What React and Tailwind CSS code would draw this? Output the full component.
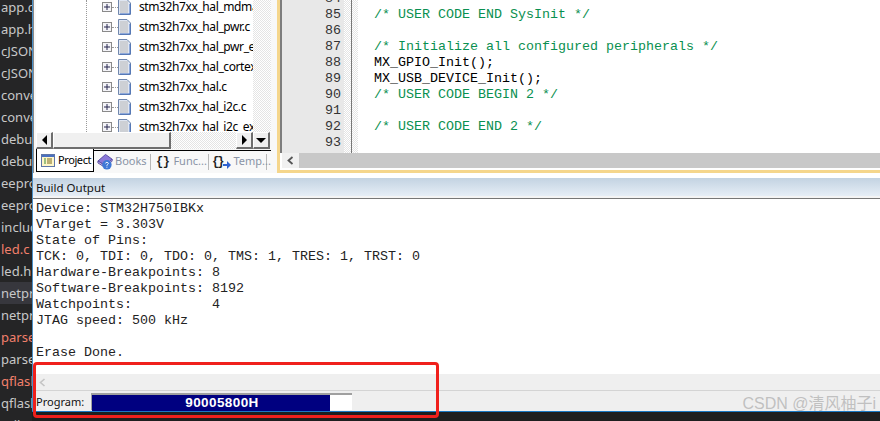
import React from "react";

const sideFiles = [
  ["app.c", "text-[#c8c8c8]"],
  ["app.h", "text-[#c8c8c8]"],
  ["cJSON.c", "text-[#c8c8c8]"],
  ["cJSON.h", "text-[#c8c8c8]"],
  ["convert.c", "text-[#c8c8c8]"],
  ["convert.h", "text-[#c8c8c8]"],
  ["debug.c", "text-[#c8c8c8]"],
  ["debug.h", "text-[#c8c8c8]"],
  ["eeprom.c", "text-[#c8c8c8]"],
  ["eeprom.h", "text-[#c8c8c8]"],
  ["include", "text-[#c8c8c8]"],
  ["led.c", "text-[#f2806c]"],
  ["led.h", "text-[#c8c8c8]"],
  ["netproc.c", "text-[#c8c8c8]", true],
  ["netproc.h", "text-[#c8c8c8]"],
  ["parser.c", "text-[#f2806c]"],
  ["parser.h", "text-[#c8c8c8]"],
  ["qflash.c", "text-[#f2806c]"],
  ["qflash.h", "text-[#c8c8c8]"],
  ["utils.c", "text-[#c8c8c8]"],
];

const treeFiles = [
  "stm32h7xx_hal_mdma.c",
  "stm32h7xx_hal_pwr.c",
  "stm32h7xx_hal_pwr_ex.c",
  "stm32h7xx_hal_cortex.c",
  "stm32h7xx_hal.c",
  "stm32h7xx_hal_i2c.c",
  "stm32h7xx_hal_i2c_ex.c",
];

const codeLines = [
  ["84", "", ""],
  ["85", "/* USER CODE END SysInit */", "c"],
  ["86", "", ""],
  ["87", "/* Initialize all configured peripherals */", "c"],
  ["88", "MX_GPIO_Init();", ""],
  ["89", "MX_USB_DEVICE_Init();", ""],
  ["90", "/* USER CODE BEGIN 2 */", "c"],
  ["91", "", ""],
  ["92", "/* USER CODE END 2 */", "c"],
  ["93", "", ""],
];

const outputLines = [
  "Device: STM32H750IBKx",
  "VTarget = 3.303V",
  "State of Pins:",
  "TCK: 0, TDI: 0, TDO: 0, TMS: 1, TRES: 1, TRST: 0",
  "Hardware-Breakpoints: 8",
  "Software-Breakpoints: 8192",
  "Watchpoints:          4",
  "JTAG speed: 500 kHz",
  "\u00a0",
  "Erase Done.",
];

const hatch = {
  backgroundImage:
    "repeating-conic-gradient(#e4e4e4 0% 25%, #ffffff 0% 50%)",
  backgroundSize: "2px 2px",
};

const PlusBox = () => (
  <svg width="10" height="10" viewBox="0 0 10 10" className="shrink-0">
    <rect x="0.5" y="0.5" width="9" height="9" fill="#f4f4f8" stroke="#8a8a8a" />
    <path d="M2 5H8M5 2V8" stroke="#27274f" />
  </svg>
);

const FileIcon = () => (
  <svg width="13" height="16" viewBox="0 0 13 16" className="shrink-0">
    <path d="M0.5 0.5H9L12.5 4V15.5H0.5Z" fill="#dfe6f2" stroke="#6f86ad" />
    <rect x="2" y="2" width="8" height="12" fill="#bdbdbd" opacity="0.55" />
    <path d="M12 5V15H2" stroke="#3f6cc0" fill="none" />
  </svg>
);

const ScrollBtn = ({ w, children }) => (
  <div
    className={`${w} h-full shrink-0 flex items-center justify-center bg-[#f0f0f0] border-r-2 border-b-2 border-[#6e6e6e] border-t border-l border-t-white border-l-white`}
  >
    {children}
  </div>
);

const ProjectIcon = () => (
  <svg width="14" height="13" viewBox="0 0 14 13" className="shrink-0">
    <rect x="0.5" y="0.5" width="13" height="12" fill="#fff6c8" stroke="#5f76a8" />
    <rect x="1" y="1" width="12" height="2" fill="#4a70c0" />
    <path d="M3 5H5M3 7H5M3 9H5" stroke="#3a8a3a" />
    <path d="M6 5H11M6 7H11M6 9H11" stroke="#7a6a20" />
  </svg>
);

const BooksIcon = () => (
  <svg width="17" height="18" viewBox="0 0 18 18" className="shrink-0">
    <path d="M1 8L9 1L16 6L9 13Z" fill="#8a78d8" stroke="#55479f" />
    <path d="M1 8V10L9 15L16 8V6L9 13Z" fill="#c9c2ee" stroke="#55479f" />
    <circle cx="10.5" cy="12" r="5" fill="#3f78d6" />
    <path d="M9 10.5C9 9 12 9 12 10.5C12 11.5 10.5 11.5 10.5 13M10.5 14V15" stroke="#fff" fill="none" />
  </svg>
);

const TempArrow = () => (
  <svg width="8" height="8" viewBox="0 0 8 8" className="shrink-0 self-end mb-[1px] -ml-[1px]">
    <path d="M0 3H4V0L8 4L4 8V5H0Z" fill="#2f62d0" />
  </svg>
);

const Sidebar = () => (
  <div className="w-[32px] shrink-0 h-full bg-[#252526] overflow-hidden font-['Noto_Sans',sans-serif] text-[13px]">
    <div className="-mt-[4px]">
      {sideFiles.map(([name, color, active]) => (
        <div
          key={name}
          className={`h-[22px] leading-[22px] pl-[1px] whitespace-nowrap overflow-hidden ${color} ${active ? "bg-[#37373d]" : ""}`}
        >
          {name}
        </div>
      ))}
    </div>
  </div>
);

const ProjectPanel = () => (
  <div className="w-[244px] shrink-0 h-full flex flex-col pl-[2px] pr-[6px] bg-[#f8f8f8] border-l border-[#8a8a8a]">
    {/* tree */}
    <div className="h-[132px] shrink-0 flex overflow-hidden bg-white">
      <div className="w-[217px] shrink-0 overflow-hidden relative">
        <div className="-mt-[3px] font-['Noto_Sans',sans-serif] text-[12px] text-black">
          {treeFiles.map((f) => (
            <div key={f} className="h-[20px] flex items-center pl-[66px] whitespace-nowrap">
              <PlusBox />
              <div className="w-[6px] shrink-0 border-t border-dotted border-[#999]" />
              <FileIcon />
              <span className="ml-[8px] tracking-[-0.4px]">{f}</span>
            </div>
          ))}
        </div>
        <div className="absolute left-[50px] top-0 bottom-0 border-l border-dotted border-[#999]" />
      </div>
      <div className="flex-1" style={hatch} />
    </div>
    {/* scrollbar */}
    <div className="h-[17px] shrink-0 flex">
      <ScrollBtn w="w-[17px]">
        <div className="w-0 h-0 border-y-[5px] border-y-transparent border-r-[5px] border-r-black" />
      </ScrollBtn>
      <div className="w-[118px] h-full shrink-0 bg-[#f0f0f0] border-r-2 border-b-2 border-[#6e6e6e] border-t border-l border-t-white border-l-white" />
      <div className="w-[65px] h-full shrink-0" style={hatch} />
      <ScrollBtn w="w-[17px]">
        <div className="w-0 h-0 border-y-[5px] border-y-transparent border-l-[5px] border-l-black" />
      </ScrollBtn>
      <ScrollBtn w="w-[17px]">
        <div className="w-0 h-0 border-x-[5px] border-x-transparent border-t-[5px] border-t-black" />
      </ScrollBtn>
    </div>
    {/* tabs */}
    <div className="h-[23px] mt-[1px] shrink-0 flex font-['Noto_Sans',sans-serif] text-[11px] text-[#8a94a6] whitespace-nowrap">
      <div className="w-[58px] h-full shrink-0 -mt-[1px] pt-[1px] flex items-center gap-[3px] pl-[4px] bg-white border-b border-x border-black text-black tracking-[-0.4px] overflow-hidden">
        <ProjectIcon />
        <span>Project</span>
      </div>
      <div className="flex-1 flex items-center border-t border-black h-[22px]">
        <div className="w-[57px] h-[16px] flex items-center gap-[1px] border-r border-[#b8b8b8] pl-[3px]">
          <BooksIcon />
          <span>Books</span>
        </div>
        <div className="w-[58px] h-[16px] flex items-center gap-[4px] border-r border-[#b8b8b8] pl-[5px]">
          <span className="font-['Liberation_Mono',monospace] font-bold text-[#222] text-[12px] tracking-[-0.5px]">{"{}"}</span>
          <span>Func...</span>
        </div>
        <div className="w-[58px] h-[16px] flex items-center gap-[2px] border-r border-[#b8b8b8] pl-[3px]">
          <span className="font-['Liberation_Mono',monospace] font-bold text-[#222] text-[12px] tracking-[-2px]">{"{}"}</span>
          <TempArrow />
          <span>Temp...</span>
        </div>
      </div>
    </div>
  </div>
);

const EditorPanel = () => (
  <div className="flex-1 min-w-0 h-[173px] flex flex-col bg-white border-l-[3px] border-b-[3px] border-[#f5d68c]">
    <div className="flex-1 min-h-0 flex overflow-hidden border-l-2 border-[#7d7d7d]">
      <div className="w-[62px] shrink-0 bg-[#e8e8e8]">
        <div className="-mt-[9px] font-['Liberation_Mono',monospace] text-[13.33px] leading-[16px] text-[#333] text-right pr-[3px]">
          {codeLines.map(([n]) => (
            <div key={n} className="h-[16px]">{n}</div>
          ))}
        </div>
      </div>
      <div className="w-[7px] shrink-0" style={hatch} />
      <div className="w-px shrink-0 bg-[#777]" />
      <div className="w-[6px] shrink-0" style={hatch} />
      <div className="flex-1 min-w-0 pl-[16px]">
        <div className="-mt-[9px] font-['Liberation_Mono',monospace] text-[13.33px] leading-[16px] whitespace-pre">
          {codeLines.map(([n, text, kind]) => (
            <div key={n} className={`h-[16px] ${kind === "c" ? "text-[#0a9050]" : "text-black"}`}>
              {text}
            </div>
          ))}
        </div>
      </div>
    </div>
    <div className="h-[15px] shrink-0 flex bg-[#c8c8c8] ml-[2px]">
      <div className="w-[17px] shrink-0 bg-[#f0f0f0] flex items-center justify-center text-[#555]">
        <svg width="7" height="9" viewBox="0 0 7 9">
          <path d="M5.5 1L1.5 4.5L5.5 8" stroke="#555" strokeWidth="1.8" fill="none" />
        </svg>
      </div>
    </div>
    <div className="h-[2px] shrink-0 bg-white" />
  </div>
);

const App = () => (
  <div className="w-[880px] h-[421px] overflow-hidden flex bg-[#1e1e1e] relative">
    <Sidebar />
    <div className="flex-1 min-w-0 h-full flex flex-col">
      <div className="h-[411px] flex flex-col bg-white border-l border-[#4a90c8]">
        <div className="h-[173px] shrink-0 flex bg-white">
          <ProjectPanel />
          <EditorPanel />
        </div>
        <div className="h-[5px] shrink-0 bg-white" />
        <div className="h-[18px] shrink-0 bg-gradient-to-b from-[#c3d3e2] to-[#e6eef6] flex items-center pl-[3px] pt-[2px] font-['Noto_Sans',sans-serif] text-[11.5px] text-[#111]">
          Build Output
        </div>
        <div className="h-[2px] shrink-0 bg-[#f4f4f4]" />
        <div className="h-px shrink-0 bg-[#777]" />
        <div className="h-[175px] shrink-0 pl-[3px] pt-[2px] bg-white font-['Liberation_Mono',monospace] text-[13.33px] leading-[16px] text-[#222] whitespace-pre overflow-hidden">
          {outputLines.map((l, i) => (
            <div key={i} className="h-[16px]">{l}</div>
          ))}
        </div>
        <div className="h-[16px] shrink-0 bg-[#efefef] flex items-center pl-[6px]">
          <svg width="7" height="9" viewBox="0 0 7 9">
            <path d="M5.5 1L1.5 4.5L5.5 8" stroke="#c4c4c4" strokeWidth="1.6" fill="none" />
          </svg>
        </div>
        <div className="h-px shrink-0 bg-[#d4d4d4]" />
        <div className="flex-1 min-h-0 bg-[#efefef] flex items-center pl-[3px] font-['Noto_Sans',sans-serif] text-[11px] text-[#111]">
          <span className="w-[55px] shrink-0 pt-[2px]">Program:</span>
          <div className="w-[261px] h-[17px] bg-white border-t-2 border-l border-[#a0a0a0] grid">
            <div className="[grid-area:1/1] w-[238px] h-full bg-[#000080]" />
            <div className="[grid-area:1/1] text-white text-center font-['Liberation_Sans',sans-serif] font-bold text-[13.5px] leading-[16px] tracking-[0.4px]">
              90005800H
            </div>
          </div>
        </div>
      </div>
      <div className="h-px shrink-0 bg-[#1a78c2]" />
      <div className="flex-1 bg-[#1e1e1e]" />
    </div>

    {/* red annotation */}
    <div className="absolute left-[33px] top-[362px] w-[406px] h-[56px] border-[3px] border-[#f0201c] rounded-[4px] pointer-events-none" />

    {/* watermark */}
    <div className="absolute right-[4px] top-[394px] text-[16px] leading-[20px] text-[#b4b4b4]/80 font-['Liberation_Sans','Noto_Sans_CJK_SC',sans-serif] whitespace-nowrap pointer-events-none">
      CSDN @清风柚子i
    </div>
  </div>
);

export default App;
